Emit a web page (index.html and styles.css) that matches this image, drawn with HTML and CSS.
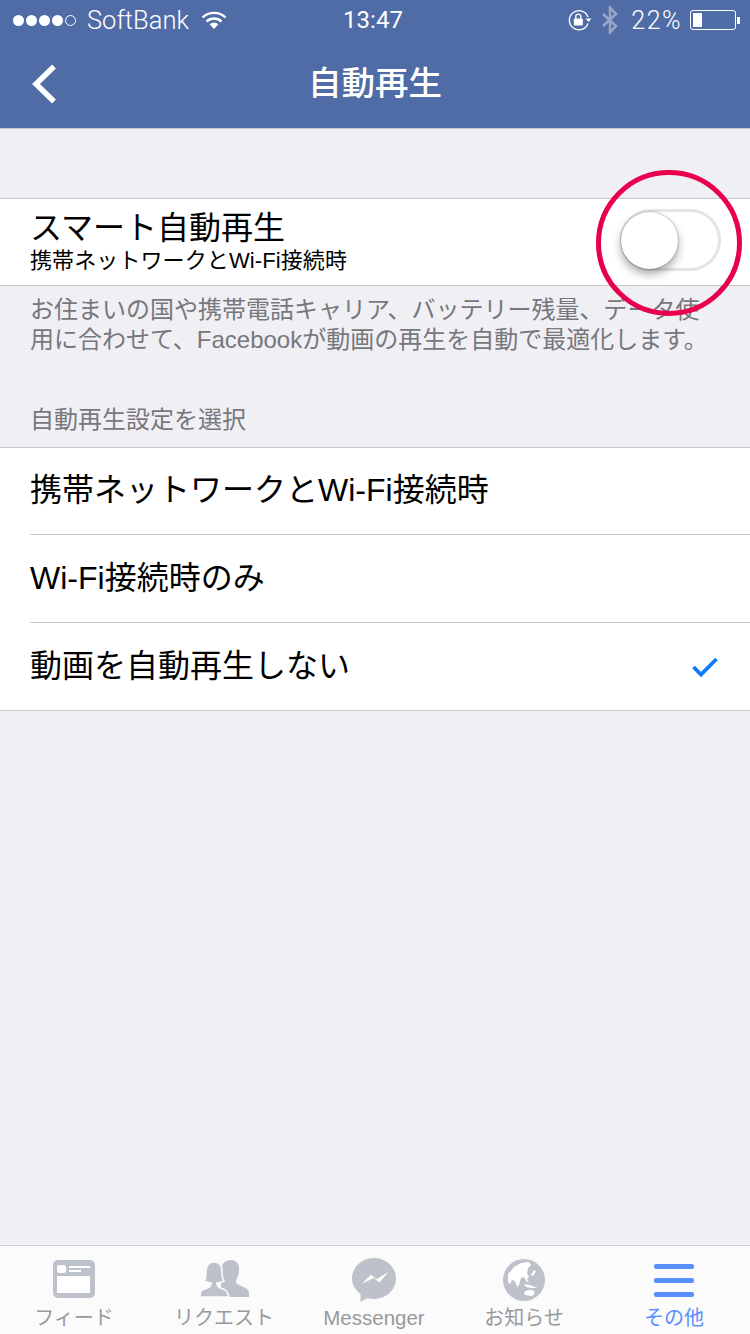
FILE: index.html
```html
<!DOCTYPE html>
<html lang="ja">

<head>
    <meta charset="UTF-8">
    <meta name="viewport" content="width=device-width, initial-scale=1.0">
    <title>自動再生</title>
    <link rel="stylesheet" href="styles.css">
</head>

<body>
    <div class="screen">
        <header class="top">
            <div class="status">
                <div class="status-left">
                    <span class="dots"><i></i><i></i><i></i><i></i><i class="empty"></i></span>
                    <span class="carrier">SoftBank</span>
                    <svg class="wifi" width="26" height="20" viewBox="0 0 26 20">
                        <path d="M1.5 7.5a16.5 16.5 0 0 1 23 0" fill="none" stroke="#fff" stroke-width="2.4"/>
                        <path d="M5.5 11.5a11 11 0 0 1 15 0" fill="none" stroke="#fff" stroke-width="2.4"/>
                        <path d="M13 19l-4.4-4.8a6.4 6.4 0 0 1 8.8 0z" fill="#fff"/>
                    </svg>
                </div>
                <div class="clock">13:47</div>
                <div class="status-right">
                    <svg class="lock" width="24" height="22" viewBox="0 0 24 22">
                        <path d="M20 8a9.6 9.6 0 1 0 0 6.5" fill="none" stroke="#fff" stroke-width="1.3"/>
                        <path d="M17.5 9.6h6l-3 3.4z" fill="#fff"/>
                        <rect x="5.8" y="9.6" width="9" height="7" rx="1" fill="#fff"/>
                        <path d="M7.8 9.8V7.6a2.5 2.5 0 0 1 5 0v2.2" fill="none" stroke="#fff" stroke-width="1.4"/>
                    </svg>
                    <svg class="bluetooth" width="18" height="28" viewBox="0 0 18 28">
                        <path d="M2 8l13 12-6 6.500V1.500l6 6.500L2 20" fill="none" stroke="#97a6c6" stroke-width="2.600"/>
                    </svg>
                    <span class="percent">22%</span>
                    <span class="battery"><span class="battery-level"></span></span>
                    <span class="battery-tip"></span>
                </div>
            </div>
            <nav class="navbar">
                <svg class="back" width="30" height="42" viewBox="0 0 30 42">
                    <path d="M25 3.500L7 21l18 17.500" fill="none" stroke="#fff" stroke-width="5.500"/>
                </svg>
                <h1 class="title">自動再生</h1>
            </nav>
        </header>

        <main class="content">
            <section class="smart-row">
                <div class="smart-text">
                    <div class="smart-title">スマート自動再生</div>
                    <div class="smart-sub">携帯ネットワークとWi-Fi接続時</div>
                </div>
                <div class="toggle"><div class="knob"></div></div>
            </section>
            <p class="note">お住まいの国や携帯電話キャリア、バッテリー残量、データ使用に合わせて、Facebookが動画の再生を自動で最適化します。</p>
            <h2 class="section-label">自動再生設定を選択</h2>
            <ul class="options">
                <li class="option">携帯ネットワークとWi-Fi接続時</li>
                <li class="option">Wi-Fi接続時のみ</li>
                <li class="option">
                    動画を自動再生しない
                    <svg class="check" width="28" height="22" viewBox="0 0 28 22">
                        <path d="M2.500 11l7.500 7.500L25.500 3" fill="none" stroke="#0a7cff" stroke-width="3.800"/>
                    </svg>
                </li>
            </ul>
        </main>

        <footer class="tabbar">
            <div class="tab">
                <svg width="44" height="40" viewBox="0 0 44 40">
                    <rect x="1" y="1" width="42" height="38" rx="5" fill="#bdc1ca"/>
                    <rect x="5" y="6" width="9" height="8" rx="2" fill="#fff"/>
                    <rect x="17" y="7" width="21" height="2" fill="#fff"/>
                    <rect x="17" y="11" width="12" height="2" fill="#fff"/>
                    <rect x="5" y="17" width="33" height="17" fill="#fff"/>
                </svg>
                <span class="tab-label">フィード</span>
            </div>
            <div class="tab">
                <svg width="50" height="40" viewBox="0 0 50 40">
                    <path d="M32 1C37 1 41 5 40 11C40 16 38 19 37 22V24C40 27 50 28 50 34V38H22V10C23 4 27 1 32 1Z" fill="#bdc1ca"/>
                    <path d="M1 38C1 33 2 31 6 30C9 29 12 28 12 25V24C9 24 7 23 5 22C7 20 7 16 7 12C7 6 11 3 15 3C20 3 23 6 23 12C23 16 23 20 25 22C23 23 21 24 18 24V25C18 28 21 29 24 30C28 31 29 34 30 38Z" fill="#bdc1ca" stroke="#fbfbfc" stroke-width="1.600"/>
                </svg>
                <span class="tab-label">リクエスト</span>
            </div>
            <div class="tab">
                <svg class="messenger-icon" width="44" height="44" viewBox="0 0 44 44">
                    <path d="M22 0c12 0 22 9 22 20.500S34 41 22 41c-2.500 0-4.500-.3-6.500-1L8.500 44v-8C3.500 32 0 27 0 20.500 0 9 10 0 22 0z" fill="#bdc1ca"/>
                    <path d="M9.700 25.700L19 16.700l5.700 4.600L36.300 14l-9 10.700-5.300-4.700z" fill="#fff"/>
                </svg>
                <span class="tab-label tab-label-latin">Messenger</span>
            </div>
            <div class="tab">
                <svg width="42" height="42" viewBox="0 0 42 42">
                    <circle cx="21" cy="21" r="21" fill="#bdc1ca"/>
                    <path d="M5 23L5 15L11 8L18 4L26 3L28 6L25 9L24 14L26 18L24 20L26 24L23 22L21 18L18 19L16 26L14 28L12 22L9 21L7 25Z" fill="#fff"/>
                    <path d="M31 11L33 12L30 17L28 16Z" fill="#fff"/>
                    <path d="M21 25L27 26L34 29L28 29L23 28Z" fill="#fff"/>
                    <path d="M21 34C22 31 28 30 31 32C32 34 31 37 28 37C25 36 22 37 21 34Z" fill="#fff"/>
                </svg>
                <span class="tab-label">お知らせ</span>
            </div>
            <div class="tab active">
                <div class="menu-icon"><i></i><i></i><i></i></div>
                <span class="tab-label">その他</span>
            </div>
        </footer>

        <div class="highlight"></div>
    </div>
</body>

</html>
```

FILE: styles.css
```css
* {
    box-sizing: border-box;
}

body {
    margin: 0;
    font-family: "Liberation Sans", "Noto Sans CJK JP", sans-serif;
    background-color: #efeff4;
    color: #000;
}

.screen {
    position: relative;
    width: 750px;
    height: 1334px;
    overflow: hidden;
    display: flex;
    flex-direction: column;
}

.top {
    height: 129px;
    background-color: #4f6ca6;
    border-bottom: 1px solid #c6c6cb;
    color: #fff;
    flex: none;
}

.status {
    height: 40px;
    padding: 0 10px 0 13px;
    display: flex;
    align-items: center;
    justify-content: space-between;
    position: relative;
    font-family: Roboto, "Liberation Sans", sans-serif;
    font-weight: 300;
}

.status-left,
.status-right {
    display: flex;
    align-items: center;
}

.dots {
    display: flex;
    gap: 2px;
    margin-right: 11px;
}

.dots i {
    width: 11px;
    height: 11px;
    border-radius: 50%;
    background-color: #fff;
}

.dots i.empty {
    background-color: transparent;
    border: 1px solid #fff;
}

.carrier {
    font-size: 25.500px;
    margin-right: 12px;
}

.clock {
    position: absolute;
    left: 0;
    right: 4px;
    text-align: center;
    font-size: 24px;
    font-weight: 400;
}

.lock {
    margin-right: 9px;
}

.bluetooth {
    margin-right: 12px;
}

.percent {
    font-size: 25px;
    letter-spacing: 1.500px;
    margin-right: 8px;
}

.battery {
    width: 46px;
    height: 20px;
    border: 1px solid #fff;
    border-radius: 3px;
    padding: 2px;
    display: block;
}

.battery-level {
    display: block;
    width: 9px;
    height: 100%;
    background-color: #fff;
}

.battery-tip {
    width: 3px;
    height: 7px;
    margin-left: 1px;
    background-color: #fff;
}

.navbar {
    height: 88px;
    position: relative;
    display: flex;
    align-items: center;
    justify-content: center;
    padding-bottom: 6px;
}

.back {
    position: absolute;
    left: 29px;
    top: 23px;
}

.title {
    margin: 0;
    font-size: 33.500px;
    font-weight: 500;
    line-height: 1;
    padding-top: 6px;
}

.content {
    flex: 1;
    padding-top: 69px;
}

.smart-row {
    height: 88px;
    background-color: #fff;
    border-top: 1px solid #c8c7cc;
    border-bottom: 1px solid #c8c7cc;
    padding: 10px 30px 0;
    display: flex;
    justify-content: space-between;
}

.smart-title {
    font-size: 32px;
    line-height: 40px;
    margin-top: -1px;
}

.smart-sub {
    font-size: 22px;
    line-height: 26px;
    letter-spacing: 0.100px;
}

.toggle {
    width: 101px;
    height: 62px;
    margin-right: -1px;
    border: 3px solid #e5e5e5;
    border-radius: 31px;
    background-color: #fff;
    position: relative;
}

.knob {
    position: absolute;
    left: -2px;
    top: 0;
    width: 57px;
    height: 57px;
    border-radius: 50%;
    background-color: #fff;
    box-shadow: 0 5px 10px rgba(0, 0, 0, 0.35), 0 0 2px rgba(0, 0, 0, 0.4);
}

.note {
    margin: 0;
    padding: 9px 30px 0;
    font-size: 24px;
    line-height: 30px;
    color: #77777c;
    height: 100px;
}

.section-label {
    margin: 0;
    padding: 18px 30px 0;
    height: 61px;
    font-size: 24px;
    font-weight: 400;
    line-height: 32px;
    color: #77777c;
}

.options {
    list-style: none;
    margin: 0;
    padding: 0 0 0 30px;
    background-color: #fff;
    border-top: 1px solid #c8c7cc;
    border-bottom: 1px solid #c8c7cc;
}

.option {
    height: 88px;
    padding: 0 31px 8px 0;
    font-size: 32px;
    display: flex;
    align-items: center;
    justify-content: space-between;
    border-bottom: 1px solid #c8c7cc;
}

.option:first-child {
    height: 87px;
}

.option:last-child {
    border-bottom: none;
    height: 87px;
}

.check {
    margin-top: 8px;
}

.tabbar {
    height: 89px;
    flex: none;
    background-color: #fbfbfc;
    border-top: 1px solid #cfcfd2;
    display: flex;
}

.tab {
    flex: 1;
    height: 88px;
    padding: 13px 2px 3px 0;
    display: flex;
    flex-direction: column;
    align-items: center;
    justify-content: space-between;
}

.messenger-icon {
    margin-top: -1px;
}

.tab-label {
    font-size: 20px;
    line-height: 26px;
    color: #999;
}

.tab-label-latin {
    font-size: 20.500px;
}

.active .tab-label {
    color: #5890ff;
}

.menu-icon {
    width: 40px;
    height: 33px;
    margin-top: 5px;
    display: flex;
    flex-direction: column;
    justify-content: space-between;
}

.menu-icon i {
    height: 5px;
    border-radius: 2px;
    background-color: #5890ff;
}

.highlight {
    position: absolute;
    left: 596px;
    top: 170px;
    width: 146px;
    height: 146px;
    border: 5px solid #e8004f;
    border-radius: 50%;
}
```
